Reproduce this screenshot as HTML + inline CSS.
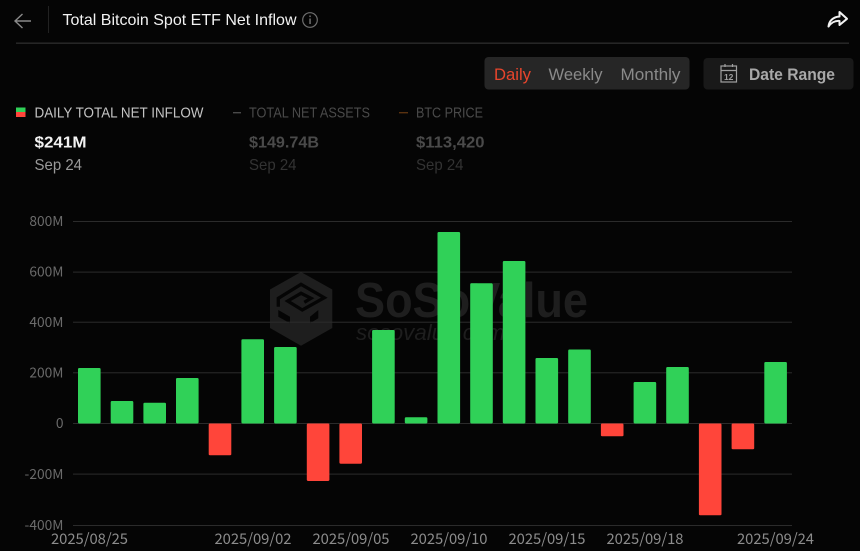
<!DOCTYPE html>
<html><head><meta charset="utf-8"><style>
html,body{margin:0;padding:0;background:#050505;width:860px;height:551px;overflow:hidden}
svg{display:block}
.l{font-family:"Liberation Sans",sans-serif}
.n{font-family:"Noto Sans CJK SC","Liberation Sans",sans-serif}
</style></head><body>
<svg width="860" height="551" viewBox="0 0 860 551" xmlns="http://www.w3.org/2000/svg">
<rect width="860" height="551" fill="#050505"/>
<!-- header -->
<path d="M31 21H15M22.5 14L15 21L22.5 28" fill="none" stroke="#8a8a8a" stroke-width="1.4"/>
<rect x="48" y="6" width="1" height="27" fill="#222"/>
<text class="l" x="62.5" y="25" font-size="16" fill="#f2f2f2" textLength="234" lengthAdjust="spacingAndGlyphs">Total Bitcoin Spot ETF Net Inflow</text>
<circle cx="310" cy="20" r="7.3" fill="none" stroke="#6f6f6f" stroke-width="1.2"/>
<rect x="309.3" y="18.5" width="1.5" height="5.5" fill="#6f6f6f"/><rect x="309.3" y="15.5" width="1.5" height="1.6" fill="#6f6f6f"/>
<rect x="16" y="42.5" width="833" height="1.4" fill="#2a2a2a"/>
<path d="M828.5 26.5C829 21 833 17 839.5 16.5V12L847 18.8L839.5 25V21C835 20.5 831 23 828.5 26.5Z" fill="none" stroke="#f2f2f2" stroke-width="2" stroke-linejoin="round"/>
<!-- tabs -->
<rect x="484.5" y="57" width="205" height="32.5" rx="4" fill="#262626"/>
<text class="l" x="494" y="80" font-size="17" fill="#e8452c" textLength="37" lengthAdjust="spacingAndGlyphs">Daily</text>
<text class="l" x="548.5" y="80" font-size="17" fill="#8a8a8a" textLength="54" lengthAdjust="spacingAndGlyphs">Weekly</text>
<text class="l" x="620.5" y="80" font-size="17" fill="#8a8a8a" textLength="60" lengthAdjust="spacingAndGlyphs">Monthly</text>
<rect x="703.5" y="58" width="150" height="31.5" rx="4" fill="#191919"/>
<g fill="none" stroke="#a0a0a0" stroke-width="1.2">
<rect x="721" y="66" width="15.5" height="16"/>
<path d="M721 70.5H736.5M725 64V67M732.5 64V67"/>
</g>
<text class="l" x="728.7" y="80" font-size="8.5" fill="#a0a0a0" text-anchor="middle" font-weight="bold">12</text>
<text class="l" x="749" y="80" font-size="16.5" font-weight="bold" fill="#a8a8a8" textLength="86" lengthAdjust="spacingAndGlyphs">Date Range</text>
<!-- legend -->
<rect x="16" y="107.5" width="9.5" height="5" fill="#30d158"/><rect x="16" y="112" width="9.5" height="5" fill="#ff453a"/>
<text class="l" x="34.5" y="117.5" font-size="14.5" fill="#c4c4c4" textLength="169" lengthAdjust="spacingAndGlyphs">DAILY TOTAL NET INFLOW</text>
<rect x="233" y="112" width="8" height="1.4" fill="#4a4a4a"/>
<text class="l" x="249" y="117.5" font-size="14.5" fill="#4a4a4a" textLength="121" lengthAdjust="spacingAndGlyphs">TOTAL NET ASSETS</text>
<rect x="399" y="112" width="9" height="1.4" fill="#5a3210"/>
<text class="l" x="416" y="117.5" font-size="14.5" fill="#4a4a4a" textLength="67" lengthAdjust="spacingAndGlyphs">BTC PRICE</text>
<text class="l" x="34.5" y="147.5" font-size="16" font-weight="bold" fill="#f2f2f2" textLength="52" lengthAdjust="spacingAndGlyphs">$241M</text>
<text class="l" x="34.5" y="170" font-size="16" fill="#9a9a9a" textLength="47.5" lengthAdjust="spacingAndGlyphs">Sep 24</text>
<text class="l" x="249" y="147.5" font-size="16" font-weight="bold" fill="#4a4a4a" textLength="70" lengthAdjust="spacingAndGlyphs">$149.74B</text>
<text class="l" x="249" y="170" font-size="16" fill="#333" textLength="47.5" lengthAdjust="spacingAndGlyphs">Sep 24</text>
<text class="l" x="416" y="147.5" font-size="16" font-weight="bold" fill="#4a4a4a" textLength="68.5" lengthAdjust="spacingAndGlyphs">$113,420</text>
<text class="l" x="416" y="170" font-size="16" fill="#333" textLength="47.5" lengthAdjust="spacingAndGlyphs">Sep 24</text>
<!-- watermark -->
<path fill="#1e1e1e" d="M301 272L332.3 289.5V328L301 345.7L270 328V289.5Z"/>
<path fill="none" stroke="#050505" stroke-width="3.3" d="M278.3 306.7V298.3L301 284.3L324.3 297.7L302.3 310L287.7 301L301 293.3L311 298.3L304.3 302.3"/>
<path fill="#050505" d="M278.3 310L290 316.7V323.3L278.3 316.7ZM310 316.7L318.3 310V318.3L310 323.3Z"/>
<text class="l" x="355" y="317" font-size="49" font-weight="bold" fill="#1e1e1e" textLength="233" lengthAdjust="spacingAndGlyphs">SoSoValue</text>
<text class="l" x="356" y="340" font-size="22" font-style="italic" fill="#1e1e1e" textLength="149" lengthAdjust="spacingAndGlyphs">sosovalue.com</text>
<!-- grid -->
<g fill="#2b2b2b">
<rect x="73" y="221" width="719" height="1"/><rect x="73" y="271.6" width="719" height="1"/><rect x="73" y="321.7" width="719" height="1"/><rect x="73" y="372.3" width="719" height="1"/><rect x="73" y="423" width="719" height="1"/><rect x="73" y="473.6" width="719" height="1"/><rect x="73" y="525" width="719" height="1"/>
</g>
<!-- axis labels -->
<g class="n" font-size="13.8" fill="#6b6b6b" text-anchor="end">
<text x="63.5" y="226">800M</text><text x="63.5" y="276.5">600M</text><text x="63.5" y="327">400M</text><text x="63.5" y="377.5">200M</text><text x="63.5" y="428">0</text><text x="63.5" y="479">-200M</text><text x="63.5" y="530">-400M</text>
</g>
<g class="n" font-size="14.8" fill="#8c8c8c" text-anchor="middle">
<text x="89.5" y="544" textLength="77">2025/08/25</text><text x="253" y="544" textLength="77">2025/09/02</text><text x="351" y="544" textLength="77">2025/09/05</text><text x="449" y="544" textLength="77">2025/09/10</text><text x="547" y="544" textLength="77">2025/09/15</text><text x="645" y="544" textLength="77">2025/09/18</text><text x="775.5" y="544" textLength="77">2025/09/24</text>
</g>
<!-- bars -->
<g fill="#30d158">
<rect x="78" y="368" width="22.6" height="55.5" rx="1.2"/>
<rect x="110.7" y="401" width="22.6" height="22.5" rx="1.2"/>
<rect x="143.4" y="402.7" width="22.6" height="20.8" rx="1.2"/>
<rect x="176" y="378" width="22.6" height="45.5" rx="1.2"/>
<rect x="241.4" y="339.3" width="22.6" height="84.2" rx="1.2"/>
<rect x="274.1" y="347" width="22.6" height="76.5" rx="1.2"/>
<rect x="372.1" y="330" width="22.6" height="93.5" rx="1.2"/>
<rect x="404.8" y="417.3" width="22.6" height="6.2" rx="1.2"/>
<rect x="437.5" y="232" width="22.6" height="191.5" rx="1.2"/>
<rect x="470.2" y="283.3" width="22.6" height="140.2" rx="1.2"/>
<rect x="502.8" y="261" width="22.6" height="162.5" rx="1.2"/>
<rect x="535.5" y="358" width="22.6" height="65.5" rx="1.2"/>
<rect x="568.2" y="349.5" width="22.6" height="74" rx="1.2"/>
<rect x="633.6" y="382" width="22.6" height="41.5" rx="1.2"/>
<rect x="666.2" y="367" width="22.6" height="56.5" rx="1.2"/>
<rect x="764.3" y="362" width="22.6" height="61.5" rx="1.2"/>
</g>
<g fill="#ff453a">
<rect x="208.7" y="423.5" width="22.6" height="31.8" rx="1.2"/>
<rect x="306.8" y="423.5" width="22.6" height="57.5" rx="1.2"/>
<rect x="339.4" y="423.5" width="22.6" height="40.2" rx="1.2"/>
<rect x="600.9" y="423.5" width="22.6" height="12.8" rx="1.2"/>
<rect x="698.9" y="423.5" width="22.6" height="91.8" rx="1.2"/>
<rect x="731.6" y="423.5" width="22.6" height="25.8" rx="1.2"/>
</g>
</svg>
</body></html>
